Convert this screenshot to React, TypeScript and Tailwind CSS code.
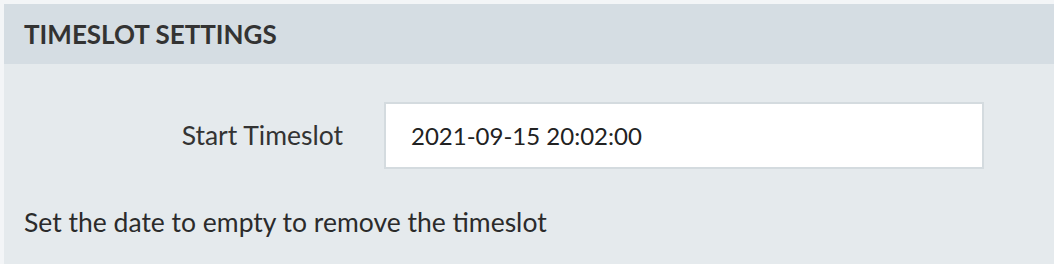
export default function App() {
  return (
    <div className="min-h-[264px] bg-[#f3f5f7] pl-[4px] pt-[4px] font-['Lato',sans-serif]">
      <div className="bg-[#e5eaed]">
        {/* Header */}
        <div className="flex h-[60px] items-center bg-[#d5dde3] pl-[20px]">
          <h2 className="text-[26px] font-bold text-[#333333]">TIMESLOT SETTINGS</h2>
        </div>

        {/* Body */}
        <div className="px-[20px] pt-[38px] pb-[30px]">
          <div className="flex items-center">
            <label className="w-[320px] pr-[1px] text-right text-[26.5px] text-[#333333]">Start Timeslot</label>
            <input
              className="ml-[40px] h-[67px] w-[600px] border-2 border-[#d4dbdf] bg-white px-[25px] text-[24px] text-[#222222] outline-none"
              defaultValue="2021-09-15 20:02:00"
            />
          </div>
          <p className="mt-[35px] text-[26.5px] leading-[36px] text-[#2b2b2b]">
            Set the date to empty to remove the timeslot
          </p>
        </div>
      </div>
    </div>
  );
}
